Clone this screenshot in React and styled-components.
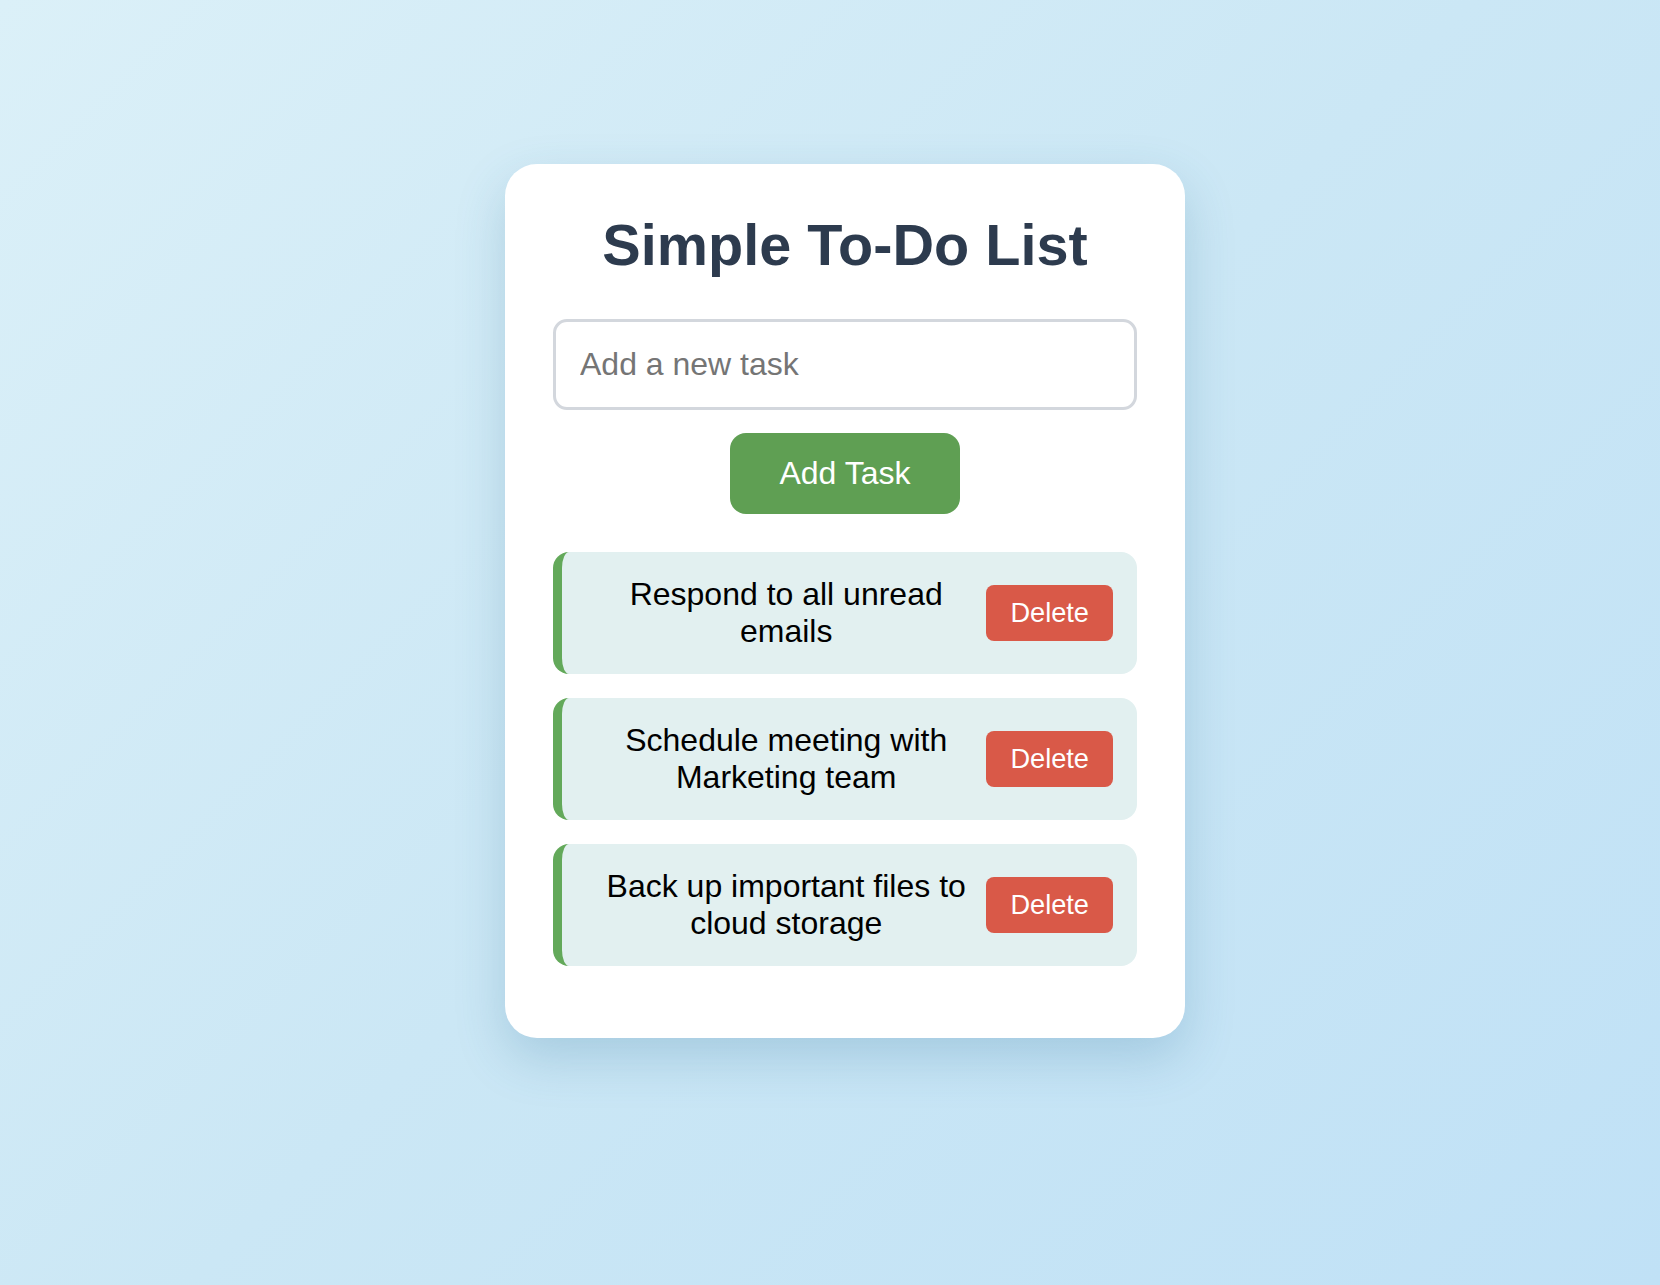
import React, { useState } from "react";
import styled, { createGlobalStyle } from "styled-components";

const GlobalStyle = createGlobalStyle`
  html, body {
    margin: 0;
    padding: 0;
    min-height: 100%;
  }
  body {
    font-family: "Liberation Sans", Arial, sans-serif;
    background: linear-gradient(135deg, #dbf0f8 0%, #cbe7f5 50%, #c0e1f6 100%);
    min-height: 1285px;
  }
`;

const Page = styled.div`
  min-height: 1285px;
  display: flex;
  justify-content: center;
  align-items: flex-start;
  padding: 164px 0 0 30px;
  box-sizing: border-box;
`;

const Card = styled.div`
  width: 680px;
  box-sizing: border-box;
  background: #ffffff;
  border-radius: 32px;
  padding: 48px 48px 48px;
  box-shadow: 0 20px 50px rgba(40, 110, 150, 0.22);
  display: flex;
  flex-direction: column;
  align-items: center;
`;

const Title = styled.h1`
  margin: 0 0 41px;
  font-size: 57.6px;
  font-weight: 700;
  color: #2d3b4e;
  line-height: normal;
  text-align: center;
`;

const TaskInput = styled.input`
  width: 100%;
  box-sizing: border-box;
  padding: 24px 24px;
  font-size: 32px;
  font-family: "Liberation Sans", Arial, sans-serif;
  border: 3px solid #d3d7dd;
  border-radius: 14px;
  outline: none;
  color: #222;
  line-height: normal;
  &::placeholder {
    color: #757575;
  }
`;

const AddButton = styled.button`
  margin-top: 23px;
  margin-bottom: 38px;
  padding: 22px 49px;
  font-size: 32px;
  font-family: "Liberation Sans", Arial, sans-serif;
  color: #ffffff;
  background: #5f9f53;
  border: none;
  border-radius: 16px;
  cursor: pointer;
  line-height: normal;
`;

const List = styled.ul`
  list-style: none;
  margin: 0;
  padding: 0;
  width: 100%;
`;

const Item = styled.li`
  display: flex;
  align-items: center;
  background: #e2f0f0;
  border-left: 9px solid #63a95a;
  border-radius: 16px;
  padding: 24px;
  margin-bottom: 24px;
  min-height: 121px;
  box-sizing: border-box;
`;

const ItemText = styled.span`
  flex: 1;
  text-align: center;
  font-size: 32px;
  color: #000000;
  line-height: normal;
`;

const DeleteButton = styled.button`
  flex-shrink: 0;
  padding: 12px 24px;
  font-size: 27.2px;
  font-family: "Liberation Sans", Arial, sans-serif;
  color: #ffffff;
  background: #d95948;
  border: none;
  border-radius: 8px;
  cursor: pointer;
  line-height: normal;
`;

export default function App() {
  const [tasks, setTasks] = useState([
    "Respond to all unread emails",
    "Schedule meeting with Marketing team",
    "Back up important files to cloud storage",
  ]);
  const [value, setValue] = useState("");

  const add = () => {
    if (!value.trim()) return;
    setTasks([...tasks, value.trim()]);
    setValue("");
  };

  return (
    <>
      <GlobalStyle />
      <Page>
        <Card>
          <Title>Simple To-Do List</Title>
          <TaskInput
            placeholder="Add a new task"
            value={value}
            onChange={(e) => setValue(e.target.value)}
          />
          <AddButton onClick={add}>Add Task</AddButton>
          <List>
            {tasks.map((t, i) => (
              <Item key={i}>
                <ItemText>{t}</ItemText>
                <DeleteButton onClick={() => setTasks(tasks.filter((_, j) => j !== i))}>
                  Delete
                </DeleteButton>
              </Item>
            ))}
          </List>
        </Card>
      </Page>
    </>
  );
}
